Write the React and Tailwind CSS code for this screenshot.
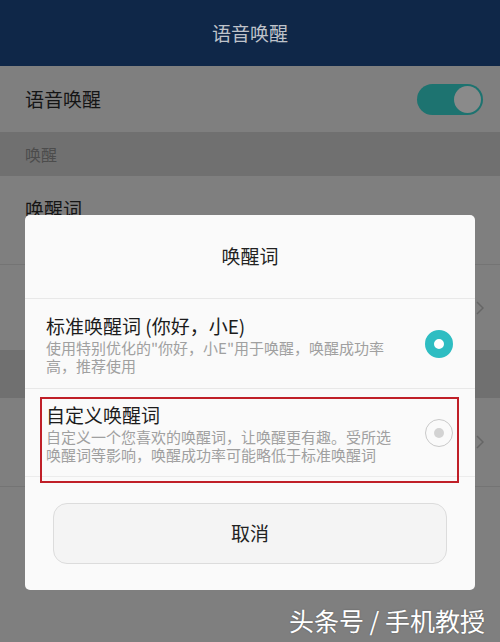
import React from 'react';

const font = { fontFamily: '"Noto Sans CJK SC", "Noto Sans", sans-serif' };

function Chevron() {
  return (
    <svg width="8" height="14" viewBox="0 0 8 14" className="absolute right-[16px]">
      <path d="M1 1l6 6-6 6" fill="none" stroke="#666" strokeWidth="1.5" />
    </svg>
  );
}

export default function App() {
  return (
    <div className="relative w-[500px] h-[642px] overflow-hidden bg-[#7f7f7f]" style={font}>
      {/* 页面背景（已被遮罩变暗） */}
      <div className="h-[66px] bg-[#0f2748] flex items-center justify-center text-[19px] text-[#bfc3ca]">
        语音唤醒
      </div>
      <div className="h-[66px] flex items-center justify-between pl-[25px] pr-[17px] text-[19px] text-[#151515]">
        <span>语音唤醒</span>
        <div className="w-[66px] h-[31px] rounded-full bg-[#1d7370] flex items-center justify-end pr-[2px]">
          <div className="w-[27px] h-[27px] rounded-full bg-[#8a8a8a]" />
        </div>
      </div>
      <div className="h-[44px] bg-[#707070] flex items-center pl-[25px] text-[16px] text-[#4c4c4c]">唤醒</div>
      <div className="h-[89px] border-b border-[#747474] pl-[25px] pt-[20px] text-[19px] text-[#151515] leading-[26px]">
        唤醒词
      </div>
      <div className="relative h-[85px] flex items-center">
        <Chevron />
      </div>
      <div className="h-[48px] bg-[#707070]" />
      <div className="relative h-[89px] border-b border-[#747474] flex items-center">
        <Chevron />
      </div>

      {/* 弹窗 */}
      <div className="absolute left-[25px] top-[215px] w-[450px] h-[375px] rounded-[5px] bg-[#fafafa]">
        <div className="h-[84px] flex items-center justify-center text-[19px] text-[#222] border-b border-[#e8e8e8]">
          唤醒词
        </div>
        <div className="h-[90px] flex items-center justify-between pl-[21px] pr-[22px] border-b border-[#e8e8e8]">
          <div>
            <div className="text-[19px] leading-[26px] text-[#1c1c1c]">标准唤醒词 (你好，小E)</div>
            <div className="text-[15px] leading-[18px] text-[#a0a0a0]">
              <div>使用特别优化的"你好，小E"用于唤醒，唤醒成功率</div>
              <div>高，推荐使用</div>
            </div>
          </div>
          <div className="w-[28px] h-[28px] rounded-full border-[9px] border-[#2ebdc2] bg-white" />
        </div>
        <div className="h-[88px] flex items-center justify-between pl-[21px] pr-[22px] border-b border-[#ececec]">
          <div>
            <div className="text-[19px] leading-[26px] text-[#1c1c1c]">自定义唤醒词</div>
            <div className="text-[15px] leading-[18px] text-[#a0a0a0]">
              <div>自定义一个您喜欢的唤醒词，让唤醒更有趣。受所选</div>
              <div>唤醒词等影响，唤醒成功率可能略低于标准唤醒词</div>
            </div>
          </div>
          <div className="w-[28px] h-[28px] rounded-full border-[1.5px] border-[#c9c9c9] flex items-center justify-center">
            <div className="w-[10px] h-[10px] rounded-full bg-[#d3d3d3]" />
          </div>
        </div>
        <div className="px-[28px] pt-[26px]">
          <div className="h-[61px] rounded-[14px] border border-[#dcdcdc] bg-[#f4f4f4] flex items-center justify-center text-[19px] text-[#222]">
            取消
          </div>
        </div>
        {/* 红色标注框 */}
        <div className="absolute left-[15px] top-[182px] w-[419px] h-[86px] border-2 border-[#c01f28]" />
      </div>

      {/* 水印 */}
      <div className="absolute right-[15px] top-[603px] text-[25px] leading-[34px] text-white [text-shadow:0_0_2px_rgba(0,0,0,0.3)]">
        头条号 / 手机教授
      </div>
    </div>
  );
}
